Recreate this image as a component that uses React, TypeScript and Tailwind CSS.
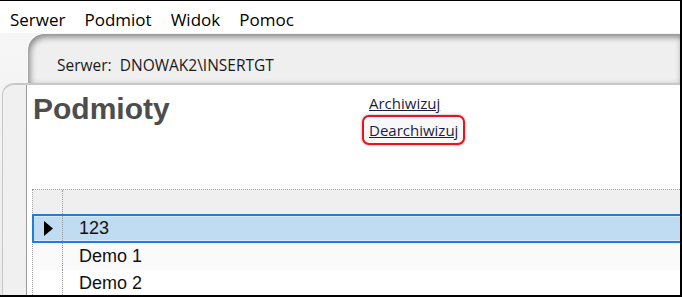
const menu = ["Serwer", "Podmiot", "Widok", "Pomoc"];

const rows = [
  { name: "123", selected: true },
  { name: "Demo 1", selected: false, bg: "bg-[#fafafa]" },
  { name: "Demo 2", selected: false, bg: "bg-white" },
];

const Arrow = () => (
  <svg width="9" height="15" viewBox="0 0 9 15">
    <polygon points="0,0 9,7.5 0,15" fill="#000" />
  </svg>
);

export default function App() {
  return (
    <div className="w-[682px] h-[297px] overflow-hidden bg-white border-t border-r-2 border-b-2 border-black flex flex-col font-['Open_Sans',sans-serif]">
      {/* menu */}
      <div className="h-[32px] shrink-0 flex pl-[10px] gap-[19px] pt-[7px] text-[17px] leading-[23px] text-black">
        {menu.map((m) => (
          <span key={m}>{m}</span>
        ))}
      </div>

      <div className="flex-1 min-h-0 flex flex-col bg-gradient-to-b from-[#f6f6f6] to-[#ececec]">
        {/* server tab */}
        <div className="h-[50px] shrink-0 flex pl-[27px]">
          <div className="flex-1 rounded-tl-[17px] border-t border-l border-[#f8f8f8] bg-[#efefef] shadow-[inset_2px_3px_6px_rgba(0,0,0,0.45)] pl-[29px] pt-[21px] text-[15.5px] leading-[20px] text-[#1a1a1a]">
            Serwer:&nbsp;&nbsp;DNOWAK2\INSERTGT
          </div>
        </div>

        {/* lower panel */}
        <div className="flex-1 min-h-0 flex ml-[2px] rounded-tl-[12px] border-t-2 border-l border-[#c8c8c8] bg-[#f0f0f0] pl-[23px]">
          <div className="flex-1 min-h-0 flex flex-col bg-white border-l border-[#9a9a9a] overflow-hidden">
            <div className="h-[104px] shrink-0 flex">
              <div className="w-[335px] pl-[6px] pt-[9px] font-['Liberation_Sans',Arial,sans-serif] font-bold text-[30px] leading-[30px] text-[#4d4d4d]">
                Podmioty
              </div>
              <div className="flex flex-col items-start pt-[8px] text-[15px] leading-[20px] text-[#1c1c44]">
                <span className="px-[7px] underline">Archiwizuj</span>
                <span className="mt-[2px] h-[30px] flex items-center px-[5px] border-2 border-[#e8131b] rounded-[7px] bg-[#f8f8f8] shadow-[0_0_3px_rgba(0,0,0,0.35)] underline">
                  Dearchiwizuj
                </span>
              </div>
            </div>

            {/* grid */}
            <div className="shrink-0 ml-[5px] border-t border-l border-dotted border-[#999] flex flex-col font-['Liberation_Sans',Arial,sans-serif] text-[18px] text-[#111]">
              <div className="h-[24px] shrink-0 flex bg-[#efefef]">
                <div className="w-[30px] border-r border-dotted border-[#999]" />
              </div>
              {rows.map((r) =>
                r.selected ? (
                  <div
                    key={r.name}
                    className="h-[29px] shrink-0 -ml-px flex bg-[#c0dcf3] border-y-2 border-l-2 border-[#1e7fd8] shadow-[inset_0_1px_0_#d9eaf9,inset_0_-1px_0_#d9eaf9]"
                  >
                    <div className="w-[29px] flex items-center pl-[10px] border-r border-dotted border-[#999]">
                      <Arrow />
                    </div>
                    <div className="flex items-center pl-[16px]">{r.name}</div>
                  </div>
                ) : (
                  <div key={r.name} className={`h-[27px] shrink-0 flex ${r.bg}`}>
                    <div className="w-[30px] border-r border-dotted border-[#999]" />
                    <div className="flex items-center pl-[16px]">{r.name}</div>
                  </div>
                )
              )}
            </div>
          </div>
        </div>
      </div>
    </div>
  );
}
